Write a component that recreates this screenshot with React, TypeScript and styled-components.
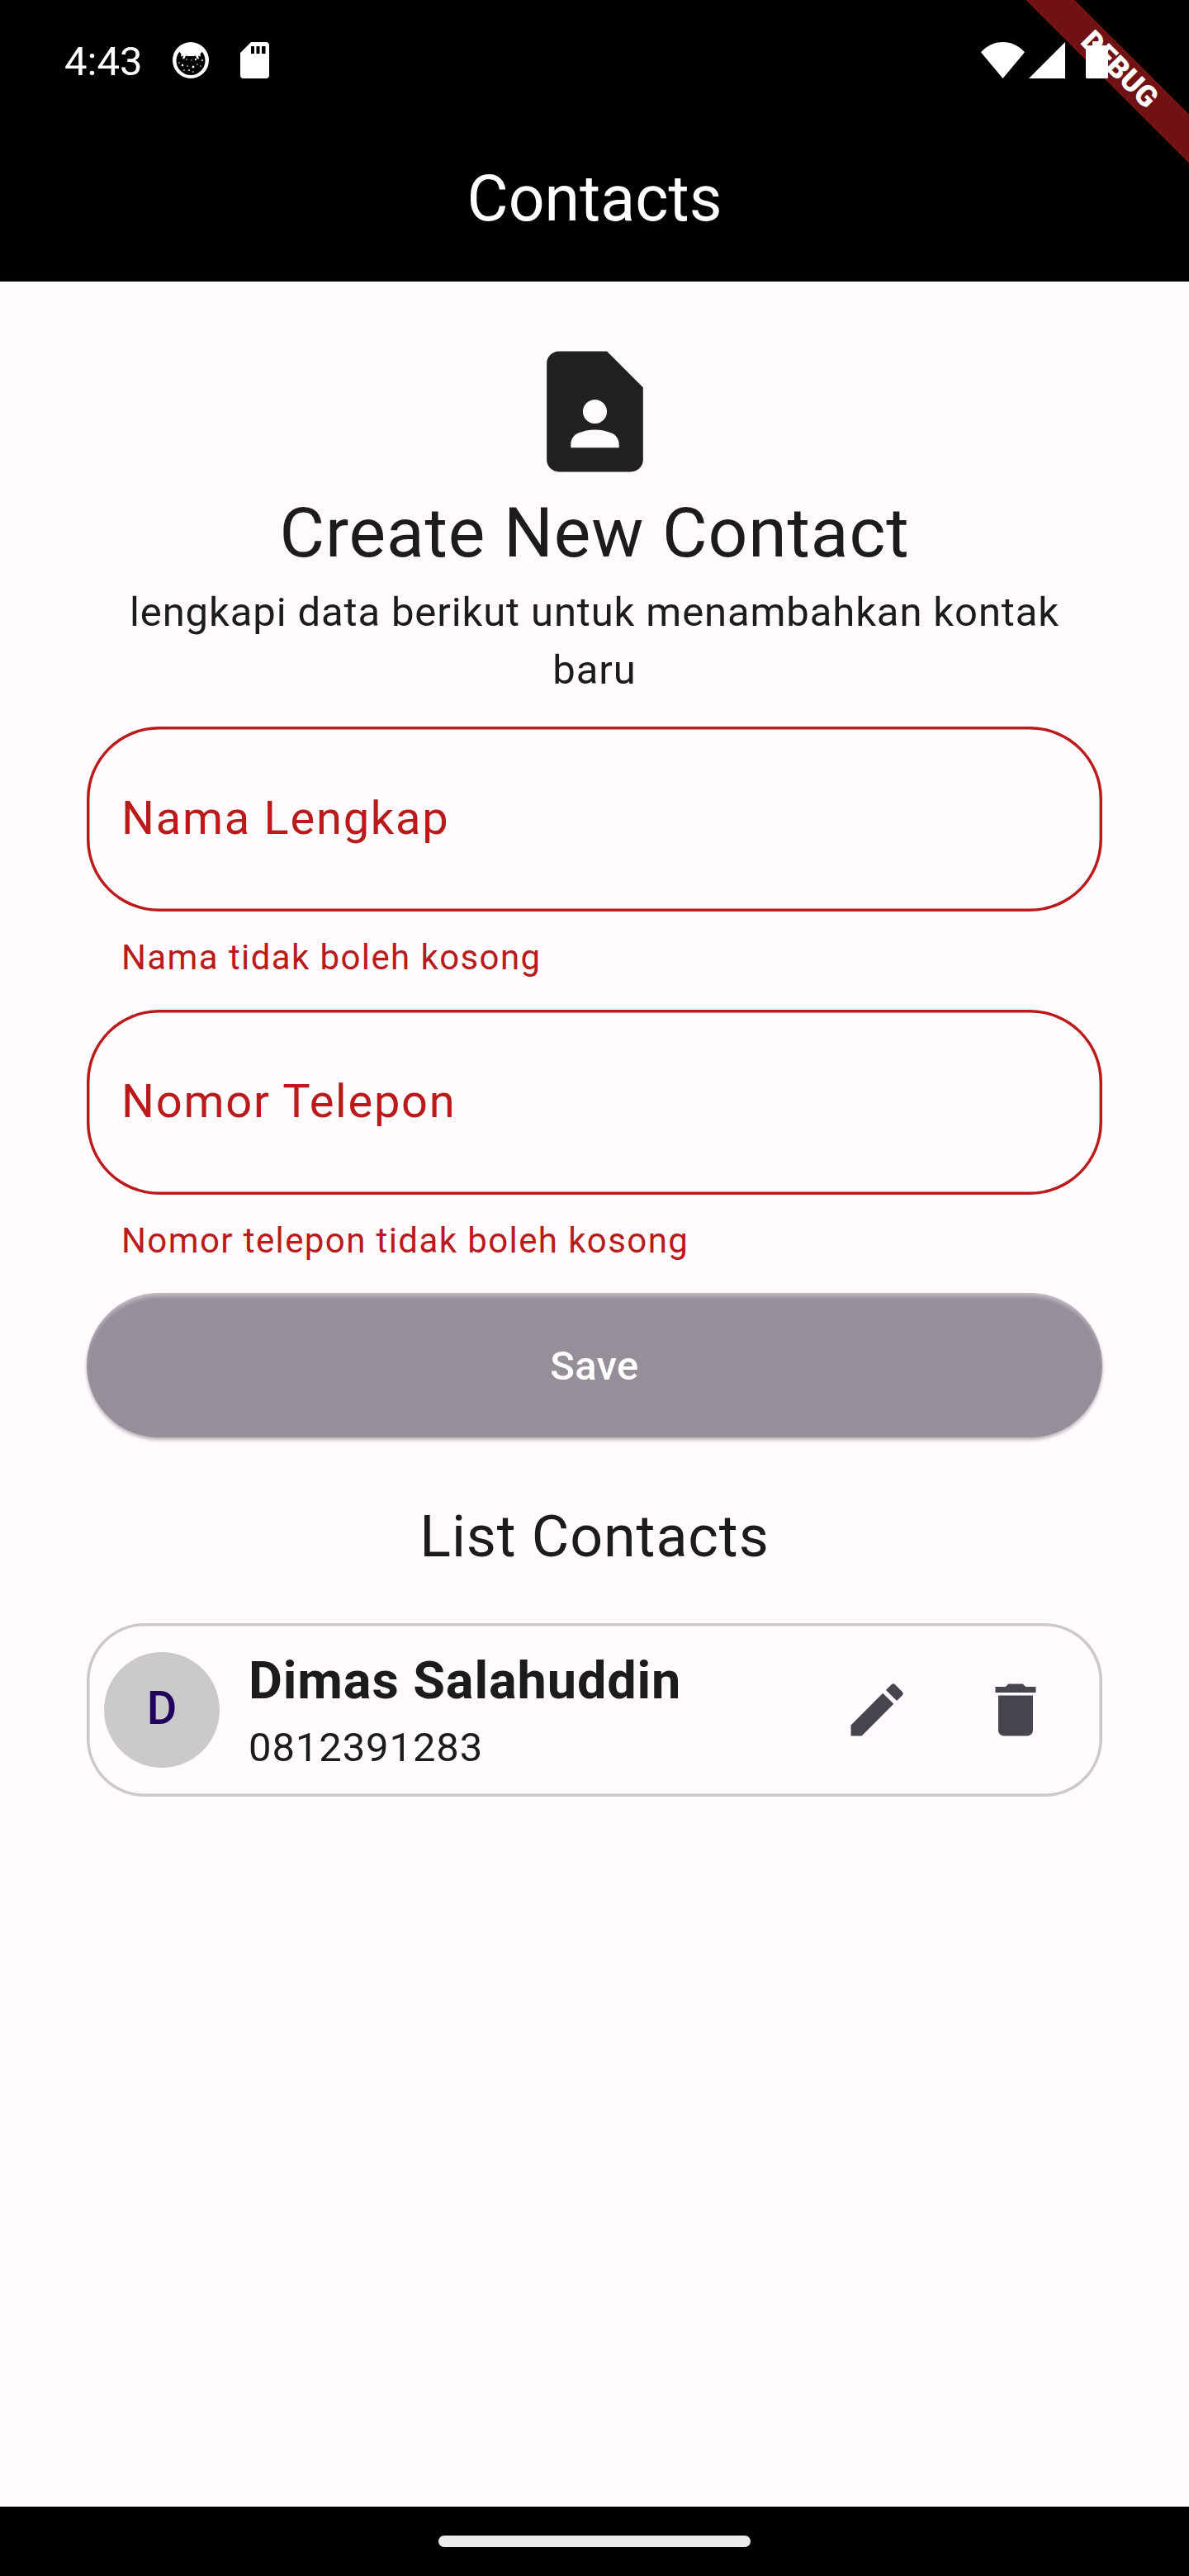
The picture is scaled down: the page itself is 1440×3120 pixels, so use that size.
import React from "react";
import styled, { createGlobalStyle } from "styled-components";

const GlobalStyle = createGlobalStyle`
  *, *::before, *::after { box-sizing: border-box; }
  html, body { margin: 0; padding: 0; background: #fffbff; }
`;

const Screen = styled.div`
  position: relative;
  display: flex;
  flex-direction: column;
  width: 1440px;
  height: 3120px;
  overflow: hidden;
  background: #fffbff;
  color: #1c1b1e;
  font-family: Roboto, "Liberation Sans", sans-serif;
  font-size: 49px;
`;

const Header = styled.header`
  position: relative;
  flex: none;
  display: flex;
  flex-direction: column;
  height: 341px;
  background: #000;
  color: #fff;
`;

const StatusBar = styled.div`
  display: flex;
  align-items: center;
  justify-content: space-between;
  height: 145px;
  padding: 0 98px 0 78px;
`;

const StatusGroup = styled.div<{ $gap: number }>`
  position: relative;
  z-index: 2;
  display: flex;
  align-items: center;
  gap: ${(p) => p.$gap}px;
`;

const Clock = styled.span`
  width: 98px;
  font-size: 49px;
  line-height: 58px;
  white-space: nowrap;
  transform: translateY(2px);
`;

const Glyph = styled.svg<{ $ml?: number }>`
  display: block;
  flex: none;
  margin-left: ${(p) => p.$ml ?? 0}px;
`;

const AppTitle = styled.h1`
  margin: 0;
  height: 196px;
  line-height: 193px;
  text-align: center;
  font-size: 77px;
  font-weight: 400;
`;

const BannerClip = styled.div`
  position: absolute;
  z-index: 1;
  top: 0;
  right: 0;
  width: 210px;
  height: 210px;
  overflow: hidden;
`;

const Banner = styled.div`
  position: absolute;
  left: -24px;
  top: 63px;
  width: 300px;
  height: 42px;
  background: #701214;
  color: #fff;
  text-align: center;
  font-size: 35.7px;
  font-weight: 900;
  line-height: 42px;
  transform: rotate(45deg);
`;

const Content = styled.main`
  flex: 1;
  display: flex;
  flex-direction: column;
  align-items: stretch;
  padding: 70px 105px 0;
`;

const Hero = styled.section`
  display: flex;
  flex-direction: column;
  align-items: center;
  text-align: center;
`;

const HeroTitle = styled.h2`
  margin: 0;
  font-size: 84px;
  font-weight: 400;
  line-height: 120px;
  letter-spacing: 0.875px;
  white-space: nowrap;
`;

const HeroText = styled.p`
  margin: 1px 0 0;
  width: 1160px;
  font-size: 49px;
  line-height: 70px;
  letter-spacing: 0.875px;
`;

const Form = styled.form`
  display: flex;
  flex-direction: column;
  margin-top: 33px;
`;

const Field = styled.div`
  height: 343px;
  color: #ba1a1a;
`;

const FieldBox = styled.div`
  display: flex;
  align-items: center;
  height: 224px;
  padding: 0 42px 2px;
  border-radius: 87.5px;
  box-shadow: inset 0 0 0 3.5px #ba1a1a;
  font-size: 56px;
  letter-spacing: 1.75px;
`;

const FieldError = styled.div`
  padding: 28px 42px 0;
  font-size: 42px;
  line-height: 56px;
  letter-spacing: 1.4px;
`;

const SaveButton = styled.button`
  height: 175px;
  padding: 2px 0 0;
  border: 0;
  border-radius: 87.5px;
  background: #968f9a;
  color: #fff;
  font: 500 49px/173px Roboto, "Liberation Sans", sans-serif;
  letter-spacing: 0.35px;
  box-shadow: 0 3px 4px rgba(0, 0, 0, 0.3), inset 0 6px 5px -2px rgba(255, 251, 255, 0.42);
`;

const ListTitle = styled.h3`
  margin: 70px 0 0;
  text-align: center;
  font-size: 70px;
  font-weight: 400;
  line-height: 100px;
  letter-spacing: 0.875px;
`;

const ContactCard = styled.article`
  display: flex;
  align-items: center;
  height: 210px;
  margin-top: 54.5px;
  padding-left: 21px;
  padding-right: 63px;
  border-radius: 70px;
  box-shadow: inset 0 0 0 3.5px #cbc9cb;
`;

const Avatar = styled.div`
  flex: none;
  width: 140px;
  height: 140px;
  border-radius: 50%;
  background: #cbc9cb;
  color: #21005d;
  text-align: center;
  font-size: 56px;
  font-weight: 500;
  line-height: 137px;
`;

const ContactInfo = styled.div`
  flex: 1;
  margin-left: 35px;
  padding-top: 2px;
  white-space: nowrap;
`;

const ContactName = styled.div`
  font-size: 63px;
  font-weight: 700;
  line-height: 90px;
  letter-spacing: 0.875px;
`;

const ContactPhone = styled.div`
  padding-top: 1px;
  font-size: 49px;
  line-height: 70px;
  letter-spacing: 0.875px;
`;

const Actions = styled.div`
  display: flex;
  gap: 84px;
  padding-top: 1px;
  color: #48454e;
`;

const NavBar = styled.footer`
  flex: none;
  display: flex;
  align-items: center;
  justify-content: center;
  height: 84px;
  background: #000;
`;

const HomePill = styled.div`
  width: 378px;
  height: 14px;
  border-radius: 7px;
  background: #ebebeb;
`;

const CatIcon = () => (
  <Glyph width="44" height="44" viewBox="0 0 44 44">
    <circle cx="22" cy="22" r="22" fill="#fff" />
    <circle cx="22" cy="22.500" r="17.500" fill="#000" />
    <path
      d="M7 10l3.500 4.500-.5 3 3-1-1 4 2.500-.5 1.500-3.500Q22 17.500 28 16.500l1.500 3.500 2.500.5-1-4 3 1-.5-3L37 10Q22-8 7 10z"
      fill="#fff"
    />
    <g fill="#fff">
      <circle cx="12" cy="28" r="1.300" />
      <circle cx="17" cy="21" r=".8" />
      <circle cx="23" cy="22" r=".7" />
      <circle cx="28" cy="21" r="1.200" />
      <circle cx="25" cy="30" r="1.400" />
      <circle cx="30" cy="27" r=".8" />
      <circle cx="36" cy="22" r="1" />
      <circle cx="8" cy="25" r=".8" />
      <circle cx="18" cy="29" r=".8" />
      <circle cx="20" cy="34" r=".9" />
      <circle cx="14" cy="34" r=".8" />
      <circle cx="25" cy="36" r=".8" />
      <circle cx="34" cy="29" r=".7" />
    </g>
  </Glyph>
);

const SdCardIcon = () => (
  <Glyph $ml={5} width="35" height="44" viewBox="0 0 35 44">
    <path
      fill="#fff"
      fillRule="evenodd"
      d="M13 0h18a4 4 0 0 1 4 4v36a4 4 0 0 1-4 4H4a4 4 0 0 1-4-4V13zM13 5v9h4V5zm6.500 0v9h4V5zm6.500 0v9h4.500V5z"
    />
  </Glyph>
);

const WifiIcon = () => (
  <Glyph width="53" height="44" viewBox="0 0 53 44">
    <path fill="#fff" d="M26.500 44L0 12.200C7 4.500 16 0 26.500 0S46 4.500 53 12.200z" />
  </Glyph>
);

const SignalIcon = () => (
  <Glyph $ml={5} width="44" height="44" viewBox="0 0 44 44">
    <path fill="#fff" d="M44 0v44H0z" />
  </Glyph>
);

const BatteryIcon = () => (
  <Glyph $ml={25} width="27" height="45" viewBox="0 0 27 45">
    <path
      fill="#fff"
      d="M8 0h11v5h6.500A1.500 1.500 0 0 1 27 6.500v37a1.500 1.500 0 0 1-1.500 1.500h-24A1.500 1.500 0 0 1 0 43.500v-37A1.500 1.500 0 0 1 1.500 5H8z"
    />
  </Glyph>
);

const ContactPageIcon = () => (
  <Glyph width="175" height="175" viewBox="0 0 24 24" fill="#212121">
    <path d="M14 2H6c-1.100 0-2 .9-2 2v16c0 1.100.9 2 2 2h12c1.100 0 2-.9 2-2V8l-6-6zm-2 8c1.100 0 2 .9 2 2s-.9 2-2 2-2-.9-2-2 .9-2 2-2zm4 8H8v-.57c0-.81.48-1.530 1.220-1.850.85-.37 1.790-.58 2.780-.58s1.930.21 2.780.58c.74.320 1.220 1.040 1.220 1.850V18z" />
  </Glyph>
);

const EditIcon = () => (
  <Glyph width="84" height="84" viewBox="0 0 24 24" fill="currentColor">
    <path d="M3 17.250V21h3.750L17.810 9.940l-3.750-3.750L3 17.250zM20.710 7.040a.996.996 0 0 0 0-1.410l-2.340-2.340a.996.996 0 0 0-1.410 0l-1.830 1.830 3.750 3.750 1.830-1.830z" />
  </Glyph>
);

const DeleteIcon = () => (
  <Glyph width="84" height="84" viewBox="0 0 24 24" fill="currentColor">
    <path d="M6 19c0 1.100.9 2 2 2h8c1.100 0 2-.9 2-2V7H6v12zM19 4h-3.500l-1-1h-5l-1 1H5v2h14V4z" />
  </Glyph>
);

const fields = [
  { label: "Nama Lengkap", error: "Nama tidak boleh kosong" },
  { label: "Nomor Telepon", error: "Nomor telepon tidak boleh kosong" },
];

const contacts = [{ name: "Dimas Salahuddin", phone: "0812391283" }];

export default function App() {
  return (
    <Screen>
      <GlobalStyle />
      <Header>
        <StatusBar>
          <StatusGroup $gap={33}>
            <Clock>4:43</Clock>
            <CatIcon />
            <SdCardIcon />
          </StatusGroup>
          <StatusGroup $gap={0}>
            <WifiIcon />
            <SignalIcon />
            <BatteryIcon />
          </StatusGroup>
        </StatusBar>
        <AppTitle>Contacts</AppTitle>
        <BannerClip>
          <Banner>DEBUG</Banner>
        </BannerClip>
      </Header>
      <Content>
        <Hero>
          <ContactPageIcon />
          <HeroTitle>Create New Contact</HeroTitle>
          <HeroText>lengkapi data berikut untuk menambahkan kontak baru</HeroText>
        </Hero>
        <Form>
          {fields.map((f) => (
            <Field key={f.label}>
              <FieldBox>{f.label}</FieldBox>
              <FieldError>{f.error}</FieldError>
            </Field>
          ))}
          <SaveButton type="button">Save</SaveButton>
        </Form>
        <ListTitle>List Contacts</ListTitle>
        {contacts.map((c) => (
          <ContactCard key={c.phone}>
            <Avatar>{c.name[0]}</Avatar>
            <ContactInfo>
              <ContactName>{c.name}</ContactName>
              <ContactPhone>{c.phone}</ContactPhone>
            </ContactInfo>
            <Actions>
              <EditIcon />
              <DeleteIcon />
            </Actions>
          </ContactCard>
        ))}
      </Content>
      <NavBar>
        <HomePill />
      </NavBar>
    </Screen>
  );
}
